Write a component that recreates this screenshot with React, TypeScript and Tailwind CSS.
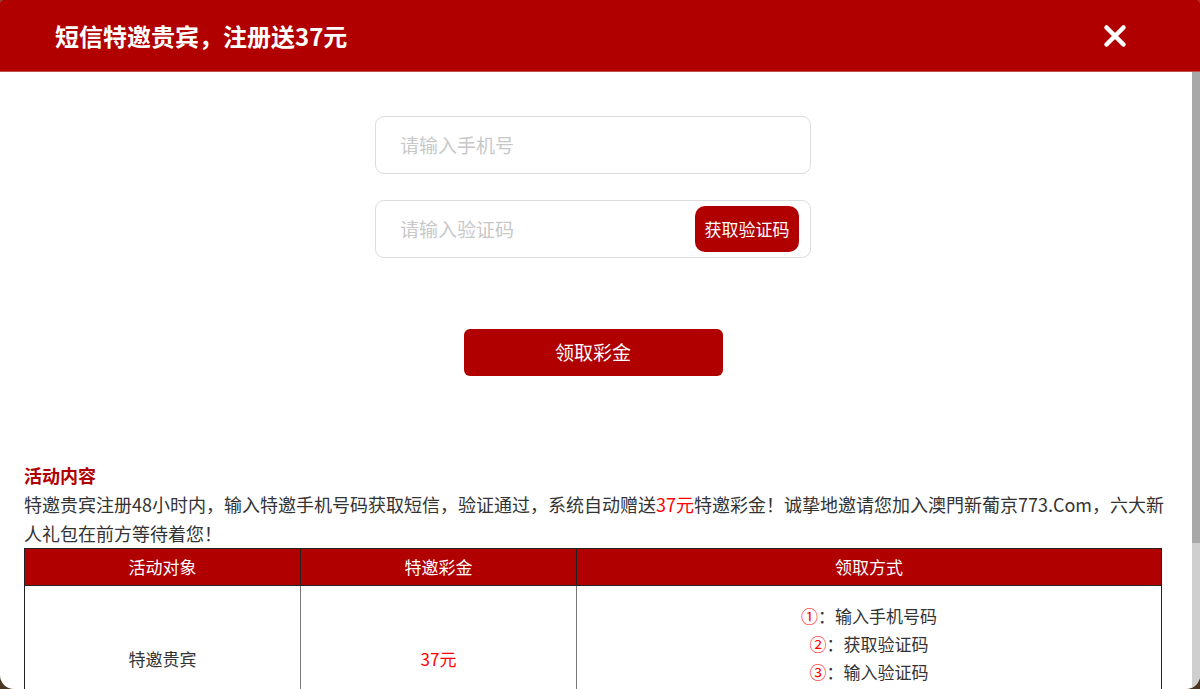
import { X } from "lucide-react";

const steps = [
  { n: "①", text: "输入手机号码" },
  { n: "②", text: "获取验证码" },
  { n: "③", text: "输入验证码" },
];

export default function App() {
  return (
    <div
      className="h-[689px] w-[1200px] overflow-hidden bg-[#4b3621]"
      style={{ fontFamily: '"Noto Sans CJK SC", "Noto Sans", sans-serif' }}
    >
      <div className="flex h-[689px] flex-col overflow-hidden rounded-t-[3px] rounded-b-[14px] bg-white">
        {/* 标题栏 */}
        <header className="flex h-[72px] shrink-0 items-center justify-between border-b border-[#c94a4a] bg-[#b00000] pl-[55px] pr-[68px]">
          <h1 className="text-[24px] font-bold leading-none text-white">短信特邀贵宾，注册送37元</h1>
          <button className="text-white">
            <X className="h-[34px] w-[34px]" strokeWidth={3.2} />
          </button>
        </header>

        <div className="flex min-h-0 flex-1">
          {/* 内容区 */}
          <div className="min-h-0 flex-1 overflow-hidden">
            <div className="pb-[177px] pl-6 pr-[30px] pt-[44px] text-[#333]">
              <div className="flex flex-col items-center gap-[26px]">
                <div className="flex h-[58px] w-[436px] items-center rounded-[9px] border border-[#dcdcdc] px-6">
                  <input
                    className="w-full bg-transparent text-[19px] outline-none placeholder:text-[#c8c8c8]"
                    placeholder="请输入手机号"
                  />
                </div>
                <div className="flex h-[58px] w-[436px] items-center rounded-[9px] border border-[#dcdcdc] pl-6 pr-[11px]">
                  <input
                    className="min-w-0 flex-1 bg-transparent text-[19px] outline-none placeholder:text-[#c8c8c8]"
                    placeholder="请输入验证码"
                  />
                  <button className="h-[46px] w-[104px] rounded-[10px] bg-[#b00000] text-[17px] text-white">
                    获取验证码
                  </button>
                </div>
              </div>

              <div className="mt-[71px] flex justify-center">
                <button className="h-[47px] w-[259px] rounded-[6px] bg-[#b00000] text-[19px] text-white">
                  领取彩金
                </button>
              </div>

              <h2 className="mt-[85px] text-[18px] font-bold leading-[29px] text-[#b00000]">活动内容</h2>
              <p className="w-[1148px] text-[18px] leading-[29px] text-[#333]">
                特邀贵宾注册48小时内，输入特邀手机号码获取短信，验证通过，系统自动赠送
                <span className="text-[#ff0000]">37元</span>
                特邀彩金！诚挚地邀请您加入澳門新葡京773.Com，六大新人礼包在前方等待着您！
              </p>

              <table className="w-full table-fixed border-collapse border border-[#222] text-[17px]">
                <thead>
                  <tr className="h-[37px] bg-[#b00000] text-white">
                    <th className="w-[276px] border border-[#222] font-normal">活动对象</th>
                    <th className="w-[276px] border border-[#222] font-normal">特邀彩金</th>
                    <th className="border border-[#222] font-normal">领取方式</th>
                  </tr>
                </thead>
                <tbody>
                  <tr className="h-[146px] text-center text-[#333]">
                    <td className="border border-[#777] border-l-[#222]">特邀贵宾</td>
                    <td className="border border-[#777] text-[#ff0000]">37元</td>
                    <td className="border border-[#777] border-r-[#222] pt-[16px] align-top leading-[28px]">
                      {steps.map((s) => (
                        <div key={s.n}>
                          <span className="text-[#ff0000]">{s.n}</span>：{s.text}
                        </div>
                      ))}
                    </td>
                  </tr>
                </tbody>
              </table>
            </div>
          </div>

          {/* 滚动条 */}
          <div className="flex w-2 shrink-0 flex-col bg-[#cfcfcf]">
            <div className="h-[471px] bg-[#a8a8a8]" />
          </div>
        </div>
      </div>
    </div>
  );
}
